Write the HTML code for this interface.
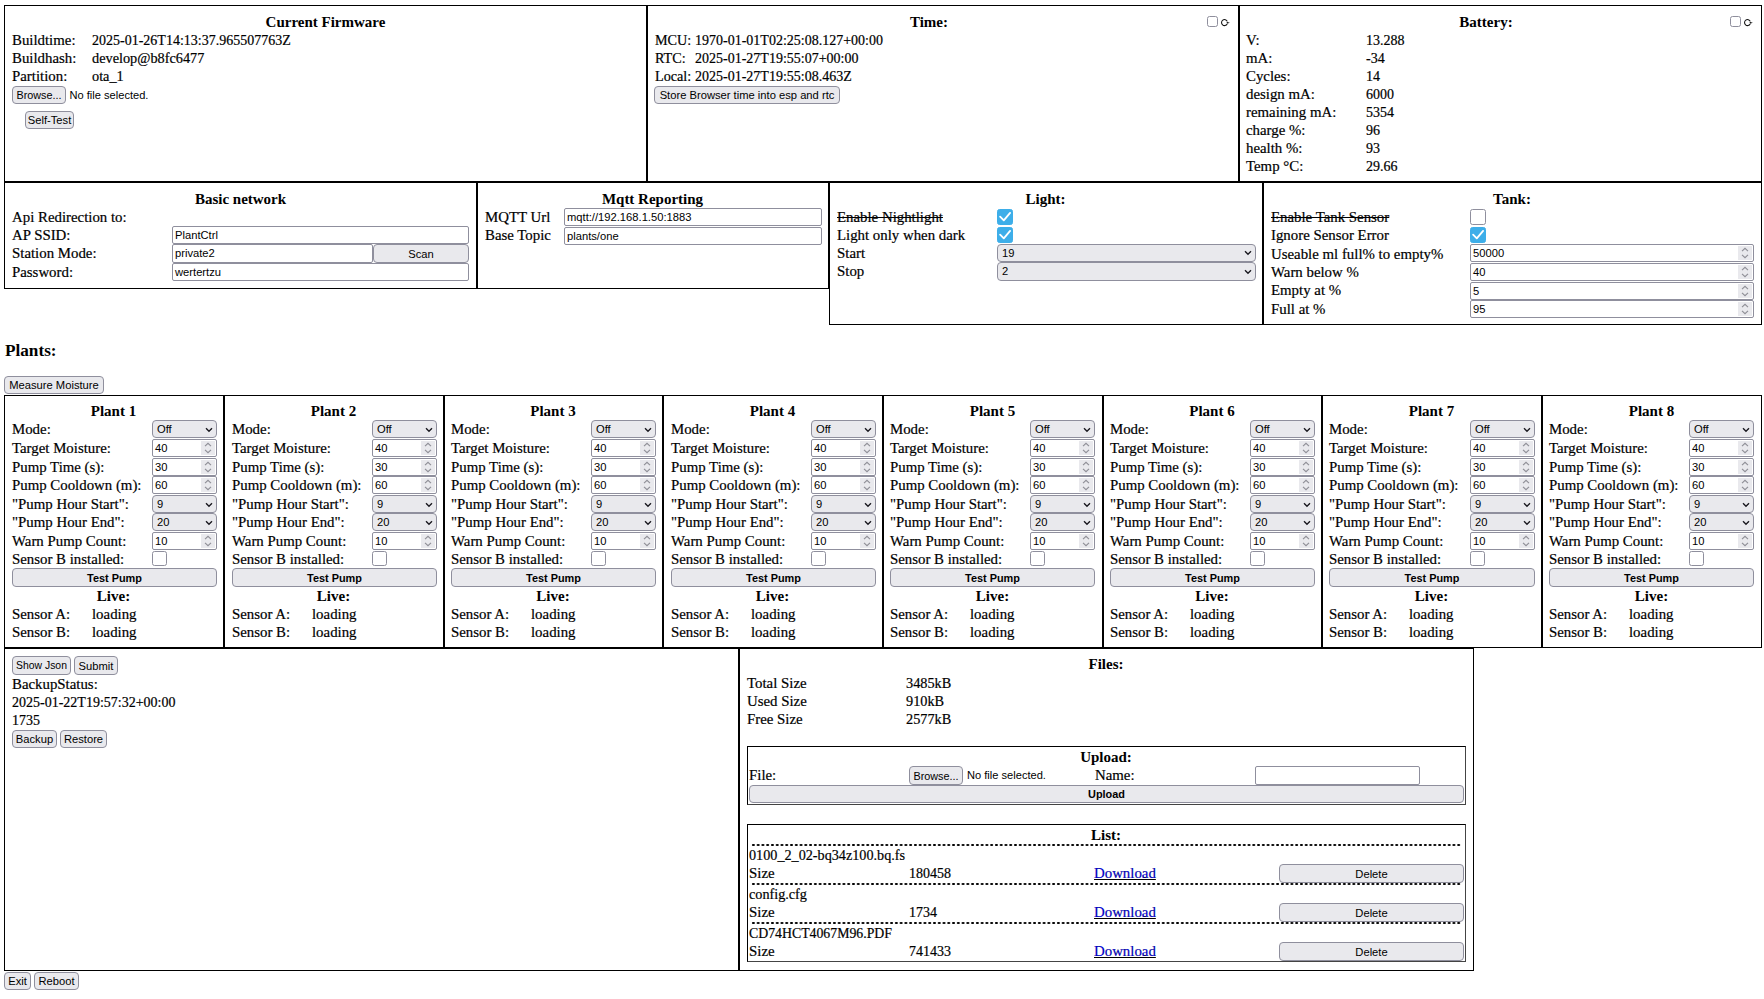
<!DOCTYPE html><html><head><meta charset="utf-8"><style>
*{box-sizing:border-box;margin:0;padding:0}
html,body{width:1764px;height:999px;overflow:hidden;background:#fff;position:relative}
.t{position:absolute;white-space:pre;line-height:20px;height:20px;color:#000}
.t.n{-webkit-text-stroke:0.2px #000}
.box{position:absolute;border:1px solid #000}
.btn{position:absolute;background:#e9e9ed;border:1px solid #8f8f9d;border-radius:4px;text-align:center;color:#000;white-space:pre;overflow:hidden}
.inp{position:absolute;background:#fff;border:1px solid #8f8f9d;border-radius:2px;padding-left:2px;font-size:11.2px;font-family:'Liberation Sans', sans-serif;color:#000;white-space:pre;overflow:hidden}
.spin{position:absolute;right:1px;width:14px;background:#e9e9ed}
.spin svg{display:block}
.sel{position:absolute;background:#e9e9ed;border:1px solid #8f8f9d;border-radius:4px;padding-left:4px;font-size:11.2px;font-family:'Liberation Sans', sans-serif;color:#000;white-space:pre;overflow:hidden}
.chev{position:absolute;right:3px}
.chk{position:absolute;border:1px solid #8f8f9d;border-radius:2.5px;background:#fff}
.chk.on{background:#3daee9;border-color:#3daee9}
.chk svg{position:absolute;left:-1px;top:-1px}
.dot{position:absolute;height:2px;background-image:radial-gradient(ellipse 1.35px 1.1px at 50% 50%,#000 80%,transparent 100%);background-size:4.78px 2px}
</style></head><body>
<div class="box" style="left:4px;top:5px;width:643px;height:177px;"></div>
<div class="box" style="left:647px;top:5px;width:592px;height:177px;"></div>
<div class="box" style="left:1239px;top:5px;width:523px;height:177px;"></div>
<div class="t" style="left:-74.5px;top:12px;width:800px;text-align:center;font:bold 15px/20px 'Liberation Serif', serif;">Current Firmware</div>
<div class="t n" style="left:12px;top:30px;font:normal 14.85px/20px 'Liberation Serif', serif;">Buildtime:</div>
<div class="t n" style="left:92px;top:31px;font:normal 14px/20px 'Liberation Serif', serif;">2025-01-26T14:13:37.965507763Z</div>
<div class="t n" style="left:12px;top:48px;font:normal 14.85px/20px 'Liberation Serif', serif;">Buildhash:</div>
<div class="t n" style="left:92px;top:48px;font:normal 14.3px/20px 'Liberation Serif', serif;">develop@b8fc6477</div>
<div class="t n" style="left:12px;top:66px;font:normal 14.85px/20px 'Liberation Serif', serif;">Partition:</div>
<div class="t n" style="left:92px;top:66px;font:normal 14.3px/20px 'Liberation Serif', serif;">ota_1</div>
<div class="btn" style="left:12px;top:86px;width:54px;height:18px;padding-top:0px;font:normal 10.8px/16px 'Liberation Sans', sans-serif;">Browse...</div>
<div class="t" style="left:69.5px;top:85px;font:normal 11.1px/20px 'Liberation Sans', sans-serif;">No file selected.</div>
<div class="btn" style="left:25px;top:111px;width:49px;height:18px;padding-top:0px;font:normal 11.2px/16px 'Liberation Sans', sans-serif;">Self-Test</div>
<div class="t" style="left:529px;top:12px;width:800px;text-align:center;font:bold 15px/20px 'Liberation Serif', serif;">Time:</div>
<div class="chk" style="left:1207px;top:16px;width:11px;height:11px"></div>
<svg style="position:absolute;left:1220px;top:17.5px" width="12" height="10" viewBox="0 0 12 10"><path d="M7.3 3.4 A3.0 3.0 0 1 0 7.2 6.0" fill="none" stroke="#111" stroke-width="1.05"/><path d="M6.6 3.7 L9.8 4.7 L7.0 5.8 Z" fill="#111"/></svg>
<div class="t n" style="left:655px;top:30px;font:normal 14.2px/20px 'Liberation Serif', serif;">MCU:</div>
<div class="t n" style="left:695px;top:31px;font:normal 14px/20px 'Liberation Serif', serif;">1970-01-01T02:25:08.127+00:00</div>
<div class="t n" style="left:655px;top:48px;font:normal 14.2px/20px 'Liberation Serif', serif;">RTC:</div>
<div class="t n" style="left:695px;top:49px;font:normal 14px/20px 'Liberation Serif', serif;">2025-01-27T19:55:07+00:00</div>
<div class="t n" style="left:655px;top:66px;font:normal 14.2px/20px 'Liberation Serif', serif;">Local:</div>
<div class="t n" style="left:695px;top:67px;font:normal 14px/20px 'Liberation Serif', serif;">2025-01-27T19:55:08.463Z</div>
<div class="btn" style="left:654px;top:86px;width:186px;height:18px;padding-top:0px;font:normal 11.2px/16px 'Liberation Sans', sans-serif;">Store Browser time into esp and rtc</div>
<div class="t" style="left:1086px;top:12px;width:800px;text-align:center;font:bold 15px/20px 'Liberation Serif', serif;">Battery:</div>
<div class="chk" style="left:1730px;top:16px;width:11px;height:11px"></div>
<svg style="position:absolute;left:1743px;top:17.5px" width="12" height="10" viewBox="0 0 12 10"><path d="M7.3 3.4 A3.0 3.0 0 1 0 7.2 6.0" fill="none" stroke="#111" stroke-width="1.05"/><path d="M6.6 3.7 L9.8 4.7 L7.0 5.8 Z" fill="#111"/></svg>
<div class="t n" style="left:1246px;top:30px;font:normal 14.85px/20px 'Liberation Serif', serif;">V:</div>
<div class="t n" style="left:1366px;top:31px;font:normal 14px/20px 'Liberation Serif', serif;">13.288</div>
<div class="t n" style="left:1246px;top:48px;font:normal 14.85px/20px 'Liberation Serif', serif;">mA:</div>
<div class="t n" style="left:1366px;top:49px;font:normal 14px/20px 'Liberation Serif', serif;">-34</div>
<div class="t n" style="left:1246px;top:66px;font:normal 14.85px/20px 'Liberation Serif', serif;">Cycles:</div>
<div class="t n" style="left:1366px;top:67px;font:normal 14px/20px 'Liberation Serif', serif;">14</div>
<div class="t n" style="left:1246px;top:84px;font:normal 14.85px/20px 'Liberation Serif', serif;">design mA:</div>
<div class="t n" style="left:1366px;top:85px;font:normal 14px/20px 'Liberation Serif', serif;">6000</div>
<div class="t n" style="left:1246px;top:102px;font:normal 14.85px/20px 'Liberation Serif', serif;">remaining mA:</div>
<div class="t n" style="left:1366px;top:103px;font:normal 14px/20px 'Liberation Serif', serif;">5354</div>
<div class="t n" style="left:1246px;top:120px;font:normal 14.85px/20px 'Liberation Serif', serif;">charge %:</div>
<div class="t n" style="left:1366px;top:121px;font:normal 14px/20px 'Liberation Serif', serif;">96</div>
<div class="t n" style="left:1246px;top:138px;font:normal 14.85px/20px 'Liberation Serif', serif;">health %:</div>
<div class="t n" style="left:1366px;top:139px;font:normal 14px/20px 'Liberation Serif', serif;">93</div>
<div class="t n" style="left:1246px;top:156px;font:normal 14.85px/20px 'Liberation Serif', serif;">Temp °C:</div>
<div class="t n" style="left:1366px;top:157px;font:normal 14px/20px 'Liberation Serif', serif;">29.66</div>
<div class="box" style="left:4px;top:182px;width:473px;height:107px;"></div>
<div class="box" style="left:477px;top:182px;width:352px;height:107px;"></div>
<div class="box" style="left:829px;top:182px;width:434px;height:143px;"></div>
<div class="box" style="left:1263px;top:182px;width:499px;height:143px;"></div>
<div class="t" style="left:-159.5px;top:189px;width:800px;text-align:center;font:bold 15px/20px 'Liberation Serif', serif;">Basic network</div>
<div class="t n" style="left:12px;top:207px;font:normal 14.85px/20px 'Liberation Serif', serif;">Api Redirection to:</div>
<div class="t n" style="left:12px;top:225px;font:normal 14.85px/20px 'Liberation Serif', serif;">AP SSID:</div>
<div class="inp" style="left:172px;top:226px;width:297px;height:18px;line-height:16px;">PlantCtrl</div>
<div class="t n" style="left:12px;top:243px;font:normal 14.85px/20px 'Liberation Serif', serif;">Station Mode:</div>
<div class="inp" style="left:172px;top:244px;width:201px;height:19px;line-height:17px;">private2</div>
<div class="btn" style="left:373px;top:244px;width:96px;height:19px;padding-top:1px;font:normal 11.2px/16px 'Liberation Sans', sans-serif;">Scan</div>
<div class="t n" style="left:12px;top:261.5px;font:normal 14.85px/20px 'Liberation Serif', serif;">Password:</div>
<div class="inp" style="left:172px;top:263px;width:297px;height:18px;line-height:16px;">wertertzu</div>
<div class="t" style="left:252.5px;top:189px;width:800px;text-align:center;font:bold 15px/20px 'Liberation Serif', serif;">Mqtt Reporting</div>
<div class="t n" style="left:485px;top:207px;font:normal 14.85px/20px 'Liberation Serif', serif;">MQTT Url</div>
<div class="inp" style="left:564px;top:208px;width:258px;height:18px;line-height:16px;">mqtt://192.168.1.50:1883</div>
<div class="t n" style="left:485px;top:225px;font:normal 14.85px/20px 'Liberation Serif', serif;">Base Topic</div>
<div class="inp" style="left:564px;top:227px;width:258px;height:18px;line-height:16px;">plants/one</div>
<div class="t" style="left:645.5px;top:189px;width:800px;text-align:center;font:bold 15px/20px 'Liberation Serif', serif;">Light:</div>
<div class="t n" style="left:837px;top:207px;font:normal 14.85px/20px 'Liberation Serif', serif;text-decoration:line-through;">Enable Nightlight</div>
<div class="chk on" style="left:997px;top:209px;width:16px;height:16px"><svg width="16" height="16" viewBox="0 0 16 16"><path d="M3.1 7.6 L6.8 11.4 L13.1 3.9" fill="none" stroke="#fff" stroke-width="1.8" stroke-linecap="round" stroke-linejoin="round"/></svg></div>
<div class="t n" style="left:837px;top:225px;font:normal 14.85px/20px 'Liberation Serif', serif;">Light only when dark</div>
<div class="chk on" style="left:997px;top:227px;width:16px;height:16px"><svg width="16" height="16" viewBox="0 0 16 16"><path d="M3.1 7.6 L6.8 11.4 L13.1 3.9" fill="none" stroke="#fff" stroke-width="1.8" stroke-linecap="round" stroke-linejoin="round"/></svg></div>
<div class="t n" style="left:837px;top:243px;font:normal 14.85px/20px 'Liberation Serif', serif;">Start</div>
<div class="sel" style="left:997px;top:244px;width:259px;height:18px;line-height:16px;">19<svg class="chev" style="top:5px" width="8" height="6" viewBox="0 0 8 6"><path d="M1 1.2 L4 4.2 L7 1.2" fill="none" stroke="#1c1b22" stroke-width="1.4"/></svg></div>
<div class="t n" style="left:837px;top:261px;font:normal 14.85px/20px 'Liberation Serif', serif;">Stop</div>
<div class="sel" style="left:997px;top:262px;width:259px;height:19px;line-height:17px;">2<svg class="chev" style="top:6px" width="8" height="6" viewBox="0 0 8 6"><path d="M1 1.2 L4 4.2 L7 1.2" fill="none" stroke="#1c1b22" stroke-width="1.4"/></svg></div>
<div class="t" style="left:1112px;top:189px;width:800px;text-align:center;font:bold 15px/20px 'Liberation Serif', serif;">Tank:</div>
<div class="t n" style="left:1271px;top:207px;font:normal 14.85px/20px 'Liberation Serif', serif;text-decoration:line-through;">Enable Tank Sensor</div>
<div class="chk" style="left:1470px;top:209px;width:16px;height:16px"></div>
<div class="t n" style="left:1271px;top:225px;font:normal 14.85px/20px 'Liberation Serif', serif;">Ignore Sensor Error</div>
<div class="chk on" style="left:1470px;top:227px;width:16px;height:16px"><svg width="16" height="16" viewBox="0 0 16 16"><path d="M3.1 7.6 L6.8 11.4 L13.1 3.9" fill="none" stroke="#fff" stroke-width="1.8" stroke-linecap="round" stroke-linejoin="round"/></svg></div>
<div class="t n" style="left:1271px;top:243.5px;font:normal 14.85px/20px 'Liberation Serif', serif;">Useable ml full% to empty%</div>
<div class="inp" style="left:1470px;top:244px;width:284px;height:18px;line-height:16px;">50000<div class="spin" style="top:1px;height:14px"><svg width="14" height="14" viewBox="0 0 14 14" preserveAspectRatio="none"><path d="M4 5.2 L7 2.4 L10 5.2 M4 8.8 L7 11.6 L10 8.8" fill="none" stroke="#8f8f97" stroke-width="1.15"/></svg></div></div>
<div class="t n" style="left:1271px;top:261.5px;font:normal 14.85px/20px 'Liberation Serif', serif;">Warn below %</div>
<div class="inp" style="left:1470px;top:263px;width:284px;height:18px;line-height:16px;">40<div class="spin" style="top:1px;height:14px"><svg width="14" height="14" viewBox="0 0 14 14" preserveAspectRatio="none"><path d="M4 5.2 L7 2.4 L10 5.2 M4 8.8 L7 11.6 L10 8.8" fill="none" stroke="#8f8f97" stroke-width="1.15"/></svg></div></div>
<div class="t n" style="left:1271px;top:280px;font:normal 14.85px/20px 'Liberation Serif', serif;">Empty at %</div>
<div class="inp" style="left:1470px;top:281.5px;width:284px;height:18.0px;line-height:16.0px;">5<div class="spin" style="top:1px;height:14.0px"><svg width="14" height="14.0" viewBox="0 0 14 14" preserveAspectRatio="none"><path d="M4 5.2 L7 2.4 L10 5.2 M4 8.8 L7 11.6 L10 8.8" fill="none" stroke="#8f8f97" stroke-width="1.15"/></svg></div></div>
<div class="t n" style="left:1271px;top:298.5px;font:normal 14.85px/20px 'Liberation Serif', serif;">Full at %</div>
<div class="inp" style="left:1470px;top:300px;width:284px;height:18px;line-height:16px;">95<div class="spin" style="top:1px;height:14px"><svg width="14" height="14" viewBox="0 0 14 14" preserveAspectRatio="none"><path d="M4 5.2 L7 2.4 L10 5.2 M4 8.8 L7 11.6 L10 8.8" fill="none" stroke="#8f8f97" stroke-width="1.15"/></svg></div></div>
<div class="t" style="left:5px;top:341px;font:bold 17.2px/20px 'Liberation Serif', serif;">Plants:</div>
<div class="btn" style="left:4px;top:376px;width:100px;height:18px;padding-top:0px;font:normal 11.2px/16px 'Liberation Sans', sans-serif;">Measure Moisture</div>
<div class="box" style="left:4px;top:395px;width:220px;height:253px;"></div>
<div class="t" style="left:-286.5px;top:401px;width:800px;text-align:center;font:bold 15px/20px 'Liberation Serif', serif;">Plant 1</div>
<div class="t n" style="left:12px;top:419px;font:normal 14.85px/20px 'Liberation Serif', serif;">Mode:</div>
<div class="sel" style="left:152px;top:420px;width:65px;height:18.30000000000001px;line-height:16.30000000000001px;">Off<svg class="chev" style="top:6px" width="8" height="6" viewBox="0 0 8 6"><path d="M1 1.2 L4 4.2 L7 1.2" fill="none" stroke="#1c1b22" stroke-width="1.4"/></svg></div>
<div class="t n" style="left:12px;top:438px;font:normal 14.85px/20px 'Liberation Serif', serif;">Target Moisture:</div>
<div class="inp" style="left:152px;top:439px;width:65px;height:18px;line-height:16px;">40<div class="spin" style="top:1px;height:14px"><svg width="14" height="14" viewBox="0 0 14 14" preserveAspectRatio="none"><path d="M4 5.2 L7 2.4 L10 5.2 M4 8.8 L7 11.6 L10 8.8" fill="none" stroke="#8f8f97" stroke-width="1.15"/></svg></div></div>
<div class="t n" style="left:12px;top:456.5px;font:normal 14.85px/20px 'Liberation Serif', serif;">Pump Time (s):</div>
<div class="inp" style="left:152px;top:457.5px;width:65px;height:18.0px;line-height:16.0px;">30<div class="spin" style="top:1px;height:14.0px"><svg width="14" height="14.0" viewBox="0 0 14 14" preserveAspectRatio="none"><path d="M4 5.2 L7 2.4 L10 5.2 M4 8.8 L7 11.6 L10 8.8" fill="none" stroke="#8f8f97" stroke-width="1.15"/></svg></div></div>
<div class="t n" style="left:12px;top:475px;font:normal 14.85px/20px 'Liberation Serif', serif;">Pump Cooldown (m):</div>
<div class="inp" style="left:152px;top:476px;width:65px;height:18px;line-height:16px;">60<div class="spin" style="top:1px;height:14px"><svg width="14" height="14" viewBox="0 0 14 14" preserveAspectRatio="none"><path d="M4 5.2 L7 2.4 L10 5.2 M4 8.8 L7 11.6 L10 8.8" fill="none" stroke="#8f8f97" stroke-width="1.15"/></svg></div></div>
<div class="t n" style="left:12px;top:494px;font:normal 14.85px/20px 'Liberation Serif', serif;">"Pump Hour Start":</div>
<div class="sel" style="left:152px;top:495px;width:65px;height:18.299999999999955px;line-height:16.299999999999955px;">9<svg class="chev" style="top:6px" width="8" height="6" viewBox="0 0 8 6"><path d="M1 1.2 L4 4.2 L7 1.2" fill="none" stroke="#1c1b22" stroke-width="1.4"/></svg></div>
<div class="t n" style="left:12px;top:512px;font:normal 14.85px/20px 'Liberation Serif', serif;">"Pump Hour End":</div>
<div class="sel" style="left:152px;top:513px;width:65px;height:18.299999999999955px;line-height:16.299999999999955px;">20<svg class="chev" style="top:6px" width="8" height="6" viewBox="0 0 8 6"><path d="M1 1.2 L4 4.2 L7 1.2" fill="none" stroke="#1c1b22" stroke-width="1.4"/></svg></div>
<div class="t n" style="left:12px;top:531px;font:normal 14.85px/20px 'Liberation Serif', serif;">Warn Pump Count:</div>
<div class="inp" style="left:152px;top:532px;width:65px;height:18px;line-height:16px;">10<div class="spin" style="top:1px;height:14px"><svg width="14" height="14" viewBox="0 0 14 14" preserveAspectRatio="none"><path d="M4 5.2 L7 2.4 L10 5.2 M4 8.8 L7 11.6 L10 8.8" fill="none" stroke="#8f8f97" stroke-width="1.15"/></svg></div></div>
<div class="t n" style="left:12px;top:549px;font:normal 14.85px/20px 'Liberation Serif', serif;">Sensor B installed:</div>
<div class="chk" style="left:152px;top:551px;width:15px;height:15px"></div>
<div class="btn" style="left:12px;top:568px;width:205px;height:19px;padding-top:1px;font:bold 10.9px/16px 'Liberation Sans', sans-serif;">Test Pump</div>
<div class="t" style="left:-286.5px;top:586px;width:800px;text-align:center;font:bold 15px/20px 'Liberation Serif', serif;">Live:</div>
<div class="t n" style="left:12px;top:604px;font:normal 14.85px/20px 'Liberation Serif', serif;">Sensor A:</div>
<div class="t n" style="left:92px;top:604px;font:normal 14.85px/20px 'Liberation Serif', serif;">loading</div>
<div class="t n" style="left:12px;top:622px;font:normal 14.85px/20px 'Liberation Serif', serif;">Sensor B:</div>
<div class="t n" style="left:92px;top:622px;font:normal 14.85px/20px 'Liberation Serif', serif;">loading</div>
<div class="box" style="left:224px;top:395px;width:220px;height:253px;"></div>
<div class="t" style="left:-66.5px;top:401px;width:800px;text-align:center;font:bold 15px/20px 'Liberation Serif', serif;">Plant 2</div>
<div class="t n" style="left:232px;top:419px;font:normal 14.85px/20px 'Liberation Serif', serif;">Mode:</div>
<div class="sel" style="left:372px;top:420px;width:65px;height:18.30000000000001px;line-height:16.30000000000001px;">Off<svg class="chev" style="top:6px" width="8" height="6" viewBox="0 0 8 6"><path d="M1 1.2 L4 4.2 L7 1.2" fill="none" stroke="#1c1b22" stroke-width="1.4"/></svg></div>
<div class="t n" style="left:232px;top:438px;font:normal 14.85px/20px 'Liberation Serif', serif;">Target Moisture:</div>
<div class="inp" style="left:372px;top:439px;width:65px;height:18px;line-height:16px;">40<div class="spin" style="top:1px;height:14px"><svg width="14" height="14" viewBox="0 0 14 14" preserveAspectRatio="none"><path d="M4 5.2 L7 2.4 L10 5.2 M4 8.8 L7 11.6 L10 8.8" fill="none" stroke="#8f8f97" stroke-width="1.15"/></svg></div></div>
<div class="t n" style="left:232px;top:456.5px;font:normal 14.85px/20px 'Liberation Serif', serif;">Pump Time (s):</div>
<div class="inp" style="left:372px;top:457.5px;width:65px;height:18.0px;line-height:16.0px;">30<div class="spin" style="top:1px;height:14.0px"><svg width="14" height="14.0" viewBox="0 0 14 14" preserveAspectRatio="none"><path d="M4 5.2 L7 2.4 L10 5.2 M4 8.8 L7 11.6 L10 8.8" fill="none" stroke="#8f8f97" stroke-width="1.15"/></svg></div></div>
<div class="t n" style="left:232px;top:475px;font:normal 14.85px/20px 'Liberation Serif', serif;">Pump Cooldown (m):</div>
<div class="inp" style="left:372px;top:476px;width:65px;height:18px;line-height:16px;">60<div class="spin" style="top:1px;height:14px"><svg width="14" height="14" viewBox="0 0 14 14" preserveAspectRatio="none"><path d="M4 5.2 L7 2.4 L10 5.2 M4 8.8 L7 11.6 L10 8.8" fill="none" stroke="#8f8f97" stroke-width="1.15"/></svg></div></div>
<div class="t n" style="left:232px;top:494px;font:normal 14.85px/20px 'Liberation Serif', serif;">"Pump Hour Start":</div>
<div class="sel" style="left:372px;top:495px;width:65px;height:18.299999999999955px;line-height:16.299999999999955px;">9<svg class="chev" style="top:6px" width="8" height="6" viewBox="0 0 8 6"><path d="M1 1.2 L4 4.2 L7 1.2" fill="none" stroke="#1c1b22" stroke-width="1.4"/></svg></div>
<div class="t n" style="left:232px;top:512px;font:normal 14.85px/20px 'Liberation Serif', serif;">"Pump Hour End":</div>
<div class="sel" style="left:372px;top:513px;width:65px;height:18.299999999999955px;line-height:16.299999999999955px;">20<svg class="chev" style="top:6px" width="8" height="6" viewBox="0 0 8 6"><path d="M1 1.2 L4 4.2 L7 1.2" fill="none" stroke="#1c1b22" stroke-width="1.4"/></svg></div>
<div class="t n" style="left:232px;top:531px;font:normal 14.85px/20px 'Liberation Serif', serif;">Warn Pump Count:</div>
<div class="inp" style="left:372px;top:532px;width:65px;height:18px;line-height:16px;">10<div class="spin" style="top:1px;height:14px"><svg width="14" height="14" viewBox="0 0 14 14" preserveAspectRatio="none"><path d="M4 5.2 L7 2.4 L10 5.2 M4 8.8 L7 11.6 L10 8.8" fill="none" stroke="#8f8f97" stroke-width="1.15"/></svg></div></div>
<div class="t n" style="left:232px;top:549px;font:normal 14.85px/20px 'Liberation Serif', serif;">Sensor B installed:</div>
<div class="chk" style="left:372px;top:551px;width:15px;height:15px"></div>
<div class="btn" style="left:232px;top:568px;width:205px;height:19px;padding-top:1px;font:bold 10.9px/16px 'Liberation Sans', sans-serif;">Test Pump</div>
<div class="t" style="left:-66.5px;top:586px;width:800px;text-align:center;font:bold 15px/20px 'Liberation Serif', serif;">Live:</div>
<div class="t n" style="left:232px;top:604px;font:normal 14.85px/20px 'Liberation Serif', serif;">Sensor A:</div>
<div class="t n" style="left:312px;top:604px;font:normal 14.85px/20px 'Liberation Serif', serif;">loading</div>
<div class="t n" style="left:232px;top:622px;font:normal 14.85px/20px 'Liberation Serif', serif;">Sensor B:</div>
<div class="t n" style="left:312px;top:622px;font:normal 14.85px/20px 'Liberation Serif', serif;">loading</div>
<div class="box" style="left:444px;top:395px;width:219px;height:253px;"></div>
<div class="t" style="left:153.0px;top:401px;width:800px;text-align:center;font:bold 15px/20px 'Liberation Serif', serif;">Plant 3</div>
<div class="t n" style="left:451px;top:419px;font:normal 14.85px/20px 'Liberation Serif', serif;">Mode:</div>
<div class="sel" style="left:591px;top:420px;width:65px;height:18.30000000000001px;line-height:16.30000000000001px;">Off<svg class="chev" style="top:6px" width="8" height="6" viewBox="0 0 8 6"><path d="M1 1.2 L4 4.2 L7 1.2" fill="none" stroke="#1c1b22" stroke-width="1.4"/></svg></div>
<div class="t n" style="left:451px;top:438px;font:normal 14.85px/20px 'Liberation Serif', serif;">Target Moisture:</div>
<div class="inp" style="left:591px;top:439px;width:65px;height:18px;line-height:16px;">40<div class="spin" style="top:1px;height:14px"><svg width="14" height="14" viewBox="0 0 14 14" preserveAspectRatio="none"><path d="M4 5.2 L7 2.4 L10 5.2 M4 8.8 L7 11.6 L10 8.8" fill="none" stroke="#8f8f97" stroke-width="1.15"/></svg></div></div>
<div class="t n" style="left:451px;top:456.5px;font:normal 14.85px/20px 'Liberation Serif', serif;">Pump Time (s):</div>
<div class="inp" style="left:591px;top:457.5px;width:65px;height:18.0px;line-height:16.0px;">30<div class="spin" style="top:1px;height:14.0px"><svg width="14" height="14.0" viewBox="0 0 14 14" preserveAspectRatio="none"><path d="M4 5.2 L7 2.4 L10 5.2 M4 8.8 L7 11.6 L10 8.8" fill="none" stroke="#8f8f97" stroke-width="1.15"/></svg></div></div>
<div class="t n" style="left:451px;top:475px;font:normal 14.85px/20px 'Liberation Serif', serif;">Pump Cooldown (m):</div>
<div class="inp" style="left:591px;top:476px;width:65px;height:18px;line-height:16px;">60<div class="spin" style="top:1px;height:14px"><svg width="14" height="14" viewBox="0 0 14 14" preserveAspectRatio="none"><path d="M4 5.2 L7 2.4 L10 5.2 M4 8.8 L7 11.6 L10 8.8" fill="none" stroke="#8f8f97" stroke-width="1.15"/></svg></div></div>
<div class="t n" style="left:451px;top:494px;font:normal 14.85px/20px 'Liberation Serif', serif;">"Pump Hour Start":</div>
<div class="sel" style="left:591px;top:495px;width:65px;height:18.299999999999955px;line-height:16.299999999999955px;">9<svg class="chev" style="top:6px" width="8" height="6" viewBox="0 0 8 6"><path d="M1 1.2 L4 4.2 L7 1.2" fill="none" stroke="#1c1b22" stroke-width="1.4"/></svg></div>
<div class="t n" style="left:451px;top:512px;font:normal 14.85px/20px 'Liberation Serif', serif;">"Pump Hour End":</div>
<div class="sel" style="left:591px;top:513px;width:65px;height:18.299999999999955px;line-height:16.299999999999955px;">20<svg class="chev" style="top:6px" width="8" height="6" viewBox="0 0 8 6"><path d="M1 1.2 L4 4.2 L7 1.2" fill="none" stroke="#1c1b22" stroke-width="1.4"/></svg></div>
<div class="t n" style="left:451px;top:531px;font:normal 14.85px/20px 'Liberation Serif', serif;">Warn Pump Count:</div>
<div class="inp" style="left:591px;top:532px;width:65px;height:18px;line-height:16px;">10<div class="spin" style="top:1px;height:14px"><svg width="14" height="14" viewBox="0 0 14 14" preserveAspectRatio="none"><path d="M4 5.2 L7 2.4 L10 5.2 M4 8.8 L7 11.6 L10 8.8" fill="none" stroke="#8f8f97" stroke-width="1.15"/></svg></div></div>
<div class="t n" style="left:451px;top:549px;font:normal 14.85px/20px 'Liberation Serif', serif;">Sensor B installed:</div>
<div class="chk" style="left:591px;top:551px;width:15px;height:15px"></div>
<div class="btn" style="left:451px;top:568px;width:205px;height:19px;padding-top:1px;font:bold 10.9px/16px 'Liberation Sans', sans-serif;">Test Pump</div>
<div class="t" style="left:153.0px;top:586px;width:800px;text-align:center;font:bold 15px/20px 'Liberation Serif', serif;">Live:</div>
<div class="t n" style="left:451px;top:604px;font:normal 14.85px/20px 'Liberation Serif', serif;">Sensor A:</div>
<div class="t n" style="left:531px;top:604px;font:normal 14.85px/20px 'Liberation Serif', serif;">loading</div>
<div class="t n" style="left:451px;top:622px;font:normal 14.85px/20px 'Liberation Serif', serif;">Sensor B:</div>
<div class="t n" style="left:531px;top:622px;font:normal 14.85px/20px 'Liberation Serif', serif;">loading</div>
<div class="box" style="left:663px;top:395px;width:220px;height:253px;"></div>
<div class="t" style="left:372.5px;top:401px;width:800px;text-align:center;font:bold 15px/20px 'Liberation Serif', serif;">Plant 4</div>
<div class="t n" style="left:671px;top:419px;font:normal 14.85px/20px 'Liberation Serif', serif;">Mode:</div>
<div class="sel" style="left:811px;top:420px;width:65px;height:18.30000000000001px;line-height:16.30000000000001px;">Off<svg class="chev" style="top:6px" width="8" height="6" viewBox="0 0 8 6"><path d="M1 1.2 L4 4.2 L7 1.2" fill="none" stroke="#1c1b22" stroke-width="1.4"/></svg></div>
<div class="t n" style="left:671px;top:438px;font:normal 14.85px/20px 'Liberation Serif', serif;">Target Moisture:</div>
<div class="inp" style="left:811px;top:439px;width:65px;height:18px;line-height:16px;">40<div class="spin" style="top:1px;height:14px"><svg width="14" height="14" viewBox="0 0 14 14" preserveAspectRatio="none"><path d="M4 5.2 L7 2.4 L10 5.2 M4 8.8 L7 11.6 L10 8.8" fill="none" stroke="#8f8f97" stroke-width="1.15"/></svg></div></div>
<div class="t n" style="left:671px;top:456.5px;font:normal 14.85px/20px 'Liberation Serif', serif;">Pump Time (s):</div>
<div class="inp" style="left:811px;top:457.5px;width:65px;height:18.0px;line-height:16.0px;">30<div class="spin" style="top:1px;height:14.0px"><svg width="14" height="14.0" viewBox="0 0 14 14" preserveAspectRatio="none"><path d="M4 5.2 L7 2.4 L10 5.2 M4 8.8 L7 11.6 L10 8.8" fill="none" stroke="#8f8f97" stroke-width="1.15"/></svg></div></div>
<div class="t n" style="left:671px;top:475px;font:normal 14.85px/20px 'Liberation Serif', serif;">Pump Cooldown (m):</div>
<div class="inp" style="left:811px;top:476px;width:65px;height:18px;line-height:16px;">60<div class="spin" style="top:1px;height:14px"><svg width="14" height="14" viewBox="0 0 14 14" preserveAspectRatio="none"><path d="M4 5.2 L7 2.4 L10 5.2 M4 8.8 L7 11.6 L10 8.8" fill="none" stroke="#8f8f97" stroke-width="1.15"/></svg></div></div>
<div class="t n" style="left:671px;top:494px;font:normal 14.85px/20px 'Liberation Serif', serif;">"Pump Hour Start":</div>
<div class="sel" style="left:811px;top:495px;width:65px;height:18.299999999999955px;line-height:16.299999999999955px;">9<svg class="chev" style="top:6px" width="8" height="6" viewBox="0 0 8 6"><path d="M1 1.2 L4 4.2 L7 1.2" fill="none" stroke="#1c1b22" stroke-width="1.4"/></svg></div>
<div class="t n" style="left:671px;top:512px;font:normal 14.85px/20px 'Liberation Serif', serif;">"Pump Hour End":</div>
<div class="sel" style="left:811px;top:513px;width:65px;height:18.299999999999955px;line-height:16.299999999999955px;">20<svg class="chev" style="top:6px" width="8" height="6" viewBox="0 0 8 6"><path d="M1 1.2 L4 4.2 L7 1.2" fill="none" stroke="#1c1b22" stroke-width="1.4"/></svg></div>
<div class="t n" style="left:671px;top:531px;font:normal 14.85px/20px 'Liberation Serif', serif;">Warn Pump Count:</div>
<div class="inp" style="left:811px;top:532px;width:65px;height:18px;line-height:16px;">10<div class="spin" style="top:1px;height:14px"><svg width="14" height="14" viewBox="0 0 14 14" preserveAspectRatio="none"><path d="M4 5.2 L7 2.4 L10 5.2 M4 8.8 L7 11.6 L10 8.8" fill="none" stroke="#8f8f97" stroke-width="1.15"/></svg></div></div>
<div class="t n" style="left:671px;top:549px;font:normal 14.85px/20px 'Liberation Serif', serif;">Sensor B installed:</div>
<div class="chk" style="left:811px;top:551px;width:15px;height:15px"></div>
<div class="btn" style="left:671px;top:568px;width:205px;height:19px;padding-top:1px;font:bold 10.9px/16px 'Liberation Sans', sans-serif;">Test Pump</div>
<div class="t" style="left:372.5px;top:586px;width:800px;text-align:center;font:bold 15px/20px 'Liberation Serif', serif;">Live:</div>
<div class="t n" style="left:671px;top:604px;font:normal 14.85px/20px 'Liberation Serif', serif;">Sensor A:</div>
<div class="t n" style="left:751px;top:604px;font:normal 14.85px/20px 'Liberation Serif', serif;">loading</div>
<div class="t n" style="left:671px;top:622px;font:normal 14.85px/20px 'Liberation Serif', serif;">Sensor B:</div>
<div class="t n" style="left:751px;top:622px;font:normal 14.85px/20px 'Liberation Serif', serif;">loading</div>
<div class="box" style="left:883px;top:395px;width:220px;height:253px;"></div>
<div class="t" style="left:592.5px;top:401px;width:800px;text-align:center;font:bold 15px/20px 'Liberation Serif', serif;">Plant 5</div>
<div class="t n" style="left:890px;top:419px;font:normal 14.85px/20px 'Liberation Serif', serif;">Mode:</div>
<div class="sel" style="left:1030px;top:420px;width:65px;height:18.30000000000001px;line-height:16.30000000000001px;">Off<svg class="chev" style="top:6px" width="8" height="6" viewBox="0 0 8 6"><path d="M1 1.2 L4 4.2 L7 1.2" fill="none" stroke="#1c1b22" stroke-width="1.4"/></svg></div>
<div class="t n" style="left:890px;top:438px;font:normal 14.85px/20px 'Liberation Serif', serif;">Target Moisture:</div>
<div class="inp" style="left:1030px;top:439px;width:65px;height:18px;line-height:16px;">40<div class="spin" style="top:1px;height:14px"><svg width="14" height="14" viewBox="0 0 14 14" preserveAspectRatio="none"><path d="M4 5.2 L7 2.4 L10 5.2 M4 8.8 L7 11.6 L10 8.8" fill="none" stroke="#8f8f97" stroke-width="1.15"/></svg></div></div>
<div class="t n" style="left:890px;top:456.5px;font:normal 14.85px/20px 'Liberation Serif', serif;">Pump Time (s):</div>
<div class="inp" style="left:1030px;top:457.5px;width:65px;height:18.0px;line-height:16.0px;">30<div class="spin" style="top:1px;height:14.0px"><svg width="14" height="14.0" viewBox="0 0 14 14" preserveAspectRatio="none"><path d="M4 5.2 L7 2.4 L10 5.2 M4 8.8 L7 11.6 L10 8.8" fill="none" stroke="#8f8f97" stroke-width="1.15"/></svg></div></div>
<div class="t n" style="left:890px;top:475px;font:normal 14.85px/20px 'Liberation Serif', serif;">Pump Cooldown (m):</div>
<div class="inp" style="left:1030px;top:476px;width:65px;height:18px;line-height:16px;">60<div class="spin" style="top:1px;height:14px"><svg width="14" height="14" viewBox="0 0 14 14" preserveAspectRatio="none"><path d="M4 5.2 L7 2.4 L10 5.2 M4 8.8 L7 11.6 L10 8.8" fill="none" stroke="#8f8f97" stroke-width="1.15"/></svg></div></div>
<div class="t n" style="left:890px;top:494px;font:normal 14.85px/20px 'Liberation Serif', serif;">"Pump Hour Start":</div>
<div class="sel" style="left:1030px;top:495px;width:65px;height:18.299999999999955px;line-height:16.299999999999955px;">9<svg class="chev" style="top:6px" width="8" height="6" viewBox="0 0 8 6"><path d="M1 1.2 L4 4.2 L7 1.2" fill="none" stroke="#1c1b22" stroke-width="1.4"/></svg></div>
<div class="t n" style="left:890px;top:512px;font:normal 14.85px/20px 'Liberation Serif', serif;">"Pump Hour End":</div>
<div class="sel" style="left:1030px;top:513px;width:65px;height:18.299999999999955px;line-height:16.299999999999955px;">20<svg class="chev" style="top:6px" width="8" height="6" viewBox="0 0 8 6"><path d="M1 1.2 L4 4.2 L7 1.2" fill="none" stroke="#1c1b22" stroke-width="1.4"/></svg></div>
<div class="t n" style="left:890px;top:531px;font:normal 14.85px/20px 'Liberation Serif', serif;">Warn Pump Count:</div>
<div class="inp" style="left:1030px;top:532px;width:65px;height:18px;line-height:16px;">10<div class="spin" style="top:1px;height:14px"><svg width="14" height="14" viewBox="0 0 14 14" preserveAspectRatio="none"><path d="M4 5.2 L7 2.4 L10 5.2 M4 8.8 L7 11.6 L10 8.8" fill="none" stroke="#8f8f97" stroke-width="1.15"/></svg></div></div>
<div class="t n" style="left:890px;top:549px;font:normal 14.85px/20px 'Liberation Serif', serif;">Sensor B installed:</div>
<div class="chk" style="left:1030px;top:551px;width:15px;height:15px"></div>
<div class="btn" style="left:890px;top:568px;width:205px;height:19px;padding-top:1px;font:bold 10.9px/16px 'Liberation Sans', sans-serif;">Test Pump</div>
<div class="t" style="left:592.5px;top:586px;width:800px;text-align:center;font:bold 15px/20px 'Liberation Serif', serif;">Live:</div>
<div class="t n" style="left:890px;top:604px;font:normal 14.85px/20px 'Liberation Serif', serif;">Sensor A:</div>
<div class="t n" style="left:970px;top:604px;font:normal 14.85px/20px 'Liberation Serif', serif;">loading</div>
<div class="t n" style="left:890px;top:622px;font:normal 14.85px/20px 'Liberation Serif', serif;">Sensor B:</div>
<div class="t n" style="left:970px;top:622px;font:normal 14.85px/20px 'Liberation Serif', serif;">loading</div>
<div class="box" style="left:1103px;top:395px;width:219px;height:253px;"></div>
<div class="t" style="left:812.0px;top:401px;width:800px;text-align:center;font:bold 15px/20px 'Liberation Serif', serif;">Plant 6</div>
<div class="t n" style="left:1110px;top:419px;font:normal 14.85px/20px 'Liberation Serif', serif;">Mode:</div>
<div class="sel" style="left:1250px;top:420px;width:65px;height:18.30000000000001px;line-height:16.30000000000001px;">Off<svg class="chev" style="top:6px" width="8" height="6" viewBox="0 0 8 6"><path d="M1 1.2 L4 4.2 L7 1.2" fill="none" stroke="#1c1b22" stroke-width="1.4"/></svg></div>
<div class="t n" style="left:1110px;top:438px;font:normal 14.85px/20px 'Liberation Serif', serif;">Target Moisture:</div>
<div class="inp" style="left:1250px;top:439px;width:65px;height:18px;line-height:16px;">40<div class="spin" style="top:1px;height:14px"><svg width="14" height="14" viewBox="0 0 14 14" preserveAspectRatio="none"><path d="M4 5.2 L7 2.4 L10 5.2 M4 8.8 L7 11.6 L10 8.8" fill="none" stroke="#8f8f97" stroke-width="1.15"/></svg></div></div>
<div class="t n" style="left:1110px;top:456.5px;font:normal 14.85px/20px 'Liberation Serif', serif;">Pump Time (s):</div>
<div class="inp" style="left:1250px;top:457.5px;width:65px;height:18.0px;line-height:16.0px;">30<div class="spin" style="top:1px;height:14.0px"><svg width="14" height="14.0" viewBox="0 0 14 14" preserveAspectRatio="none"><path d="M4 5.2 L7 2.4 L10 5.2 M4 8.8 L7 11.6 L10 8.8" fill="none" stroke="#8f8f97" stroke-width="1.15"/></svg></div></div>
<div class="t n" style="left:1110px;top:475px;font:normal 14.85px/20px 'Liberation Serif', serif;">Pump Cooldown (m):</div>
<div class="inp" style="left:1250px;top:476px;width:65px;height:18px;line-height:16px;">60<div class="spin" style="top:1px;height:14px"><svg width="14" height="14" viewBox="0 0 14 14" preserveAspectRatio="none"><path d="M4 5.2 L7 2.4 L10 5.2 M4 8.8 L7 11.6 L10 8.8" fill="none" stroke="#8f8f97" stroke-width="1.15"/></svg></div></div>
<div class="t n" style="left:1110px;top:494px;font:normal 14.85px/20px 'Liberation Serif', serif;">"Pump Hour Start":</div>
<div class="sel" style="left:1250px;top:495px;width:65px;height:18.299999999999955px;line-height:16.299999999999955px;">9<svg class="chev" style="top:6px" width="8" height="6" viewBox="0 0 8 6"><path d="M1 1.2 L4 4.2 L7 1.2" fill="none" stroke="#1c1b22" stroke-width="1.4"/></svg></div>
<div class="t n" style="left:1110px;top:512px;font:normal 14.85px/20px 'Liberation Serif', serif;">"Pump Hour End":</div>
<div class="sel" style="left:1250px;top:513px;width:65px;height:18.299999999999955px;line-height:16.299999999999955px;">20<svg class="chev" style="top:6px" width="8" height="6" viewBox="0 0 8 6"><path d="M1 1.2 L4 4.2 L7 1.2" fill="none" stroke="#1c1b22" stroke-width="1.4"/></svg></div>
<div class="t n" style="left:1110px;top:531px;font:normal 14.85px/20px 'Liberation Serif', serif;">Warn Pump Count:</div>
<div class="inp" style="left:1250px;top:532px;width:65px;height:18px;line-height:16px;">10<div class="spin" style="top:1px;height:14px"><svg width="14" height="14" viewBox="0 0 14 14" preserveAspectRatio="none"><path d="M4 5.2 L7 2.4 L10 5.2 M4 8.8 L7 11.6 L10 8.8" fill="none" stroke="#8f8f97" stroke-width="1.15"/></svg></div></div>
<div class="t n" style="left:1110px;top:549px;font:normal 14.85px/20px 'Liberation Serif', serif;">Sensor B installed:</div>
<div class="chk" style="left:1250px;top:551px;width:15px;height:15px"></div>
<div class="btn" style="left:1110px;top:568px;width:205px;height:19px;padding-top:1px;font:bold 10.9px/16px 'Liberation Sans', sans-serif;">Test Pump</div>
<div class="t" style="left:812.0px;top:586px;width:800px;text-align:center;font:bold 15px/20px 'Liberation Serif', serif;">Live:</div>
<div class="t n" style="left:1110px;top:604px;font:normal 14.85px/20px 'Liberation Serif', serif;">Sensor A:</div>
<div class="t n" style="left:1190px;top:604px;font:normal 14.85px/20px 'Liberation Serif', serif;">loading</div>
<div class="t n" style="left:1110px;top:622px;font:normal 14.85px/20px 'Liberation Serif', serif;">Sensor B:</div>
<div class="t n" style="left:1190px;top:622px;font:normal 14.85px/20px 'Liberation Serif', serif;">loading</div>
<div class="box" style="left:1322px;top:395px;width:220px;height:253px;"></div>
<div class="t" style="left:1031.5px;top:401px;width:800px;text-align:center;font:bold 15px/20px 'Liberation Serif', serif;">Plant 7</div>
<div class="t n" style="left:1329px;top:419px;font:normal 14.85px/20px 'Liberation Serif', serif;">Mode:</div>
<div class="sel" style="left:1470px;top:420px;width:65px;height:18.30000000000001px;line-height:16.30000000000001px;">Off<svg class="chev" style="top:6px" width="8" height="6" viewBox="0 0 8 6"><path d="M1 1.2 L4 4.2 L7 1.2" fill="none" stroke="#1c1b22" stroke-width="1.4"/></svg></div>
<div class="t n" style="left:1329px;top:438px;font:normal 14.85px/20px 'Liberation Serif', serif;">Target Moisture:</div>
<div class="inp" style="left:1470px;top:439px;width:65px;height:18px;line-height:16px;">40<div class="spin" style="top:1px;height:14px"><svg width="14" height="14" viewBox="0 0 14 14" preserveAspectRatio="none"><path d="M4 5.2 L7 2.4 L10 5.2 M4 8.8 L7 11.6 L10 8.8" fill="none" stroke="#8f8f97" stroke-width="1.15"/></svg></div></div>
<div class="t n" style="left:1329px;top:456.5px;font:normal 14.85px/20px 'Liberation Serif', serif;">Pump Time (s):</div>
<div class="inp" style="left:1470px;top:457.5px;width:65px;height:18.0px;line-height:16.0px;">30<div class="spin" style="top:1px;height:14.0px"><svg width="14" height="14.0" viewBox="0 0 14 14" preserveAspectRatio="none"><path d="M4 5.2 L7 2.4 L10 5.2 M4 8.8 L7 11.6 L10 8.8" fill="none" stroke="#8f8f97" stroke-width="1.15"/></svg></div></div>
<div class="t n" style="left:1329px;top:475px;font:normal 14.85px/20px 'Liberation Serif', serif;">Pump Cooldown (m):</div>
<div class="inp" style="left:1470px;top:476px;width:65px;height:18px;line-height:16px;">60<div class="spin" style="top:1px;height:14px"><svg width="14" height="14" viewBox="0 0 14 14" preserveAspectRatio="none"><path d="M4 5.2 L7 2.4 L10 5.2 M4 8.8 L7 11.6 L10 8.8" fill="none" stroke="#8f8f97" stroke-width="1.15"/></svg></div></div>
<div class="t n" style="left:1329px;top:494px;font:normal 14.85px/20px 'Liberation Serif', serif;">"Pump Hour Start":</div>
<div class="sel" style="left:1470px;top:495px;width:65px;height:18.299999999999955px;line-height:16.299999999999955px;">9<svg class="chev" style="top:6px" width="8" height="6" viewBox="0 0 8 6"><path d="M1 1.2 L4 4.2 L7 1.2" fill="none" stroke="#1c1b22" stroke-width="1.4"/></svg></div>
<div class="t n" style="left:1329px;top:512px;font:normal 14.85px/20px 'Liberation Serif', serif;">"Pump Hour End":</div>
<div class="sel" style="left:1470px;top:513px;width:65px;height:18.299999999999955px;line-height:16.299999999999955px;">20<svg class="chev" style="top:6px" width="8" height="6" viewBox="0 0 8 6"><path d="M1 1.2 L4 4.2 L7 1.2" fill="none" stroke="#1c1b22" stroke-width="1.4"/></svg></div>
<div class="t n" style="left:1329px;top:531px;font:normal 14.85px/20px 'Liberation Serif', serif;">Warn Pump Count:</div>
<div class="inp" style="left:1470px;top:532px;width:65px;height:18px;line-height:16px;">10<div class="spin" style="top:1px;height:14px"><svg width="14" height="14" viewBox="0 0 14 14" preserveAspectRatio="none"><path d="M4 5.2 L7 2.4 L10 5.2 M4 8.8 L7 11.6 L10 8.8" fill="none" stroke="#8f8f97" stroke-width="1.15"/></svg></div></div>
<div class="t n" style="left:1329px;top:549px;font:normal 14.85px/20px 'Liberation Serif', serif;">Sensor B installed:</div>
<div class="chk" style="left:1470px;top:551px;width:15px;height:15px"></div>
<div class="btn" style="left:1329px;top:568px;width:206px;height:19px;padding-top:1px;font:bold 10.9px/16px 'Liberation Sans', sans-serif;">Test Pump</div>
<div class="t" style="left:1031.5px;top:586px;width:800px;text-align:center;font:bold 15px/20px 'Liberation Serif', serif;">Live:</div>
<div class="t n" style="left:1329px;top:604px;font:normal 14.85px/20px 'Liberation Serif', serif;">Sensor A:</div>
<div class="t n" style="left:1409px;top:604px;font:normal 14.85px/20px 'Liberation Serif', serif;">loading</div>
<div class="t n" style="left:1329px;top:622px;font:normal 14.85px/20px 'Liberation Serif', serif;">Sensor B:</div>
<div class="t n" style="left:1409px;top:622px;font:normal 14.85px/20px 'Liberation Serif', serif;">loading</div>
<div class="box" style="left:1542px;top:395px;width:220px;height:253px;"></div>
<div class="t" style="left:1251.5px;top:401px;width:800px;text-align:center;font:bold 15px/20px 'Liberation Serif', serif;">Plant 8</div>
<div class="t n" style="left:1549px;top:419px;font:normal 14.85px/20px 'Liberation Serif', serif;">Mode:</div>
<div class="sel" style="left:1689px;top:420px;width:65px;height:18.30000000000001px;line-height:16.30000000000001px;">Off<svg class="chev" style="top:6px" width="8" height="6" viewBox="0 0 8 6"><path d="M1 1.2 L4 4.2 L7 1.2" fill="none" stroke="#1c1b22" stroke-width="1.4"/></svg></div>
<div class="t n" style="left:1549px;top:438px;font:normal 14.85px/20px 'Liberation Serif', serif;">Target Moisture:</div>
<div class="inp" style="left:1689px;top:439px;width:65px;height:18px;line-height:16px;">40<div class="spin" style="top:1px;height:14px"><svg width="14" height="14" viewBox="0 0 14 14" preserveAspectRatio="none"><path d="M4 5.2 L7 2.4 L10 5.2 M4 8.8 L7 11.6 L10 8.8" fill="none" stroke="#8f8f97" stroke-width="1.15"/></svg></div></div>
<div class="t n" style="left:1549px;top:456.5px;font:normal 14.85px/20px 'Liberation Serif', serif;">Pump Time (s):</div>
<div class="inp" style="left:1689px;top:457.5px;width:65px;height:18.0px;line-height:16.0px;">30<div class="spin" style="top:1px;height:14.0px"><svg width="14" height="14.0" viewBox="0 0 14 14" preserveAspectRatio="none"><path d="M4 5.2 L7 2.4 L10 5.2 M4 8.8 L7 11.6 L10 8.8" fill="none" stroke="#8f8f97" stroke-width="1.15"/></svg></div></div>
<div class="t n" style="left:1549px;top:475px;font:normal 14.85px/20px 'Liberation Serif', serif;">Pump Cooldown (m):</div>
<div class="inp" style="left:1689px;top:476px;width:65px;height:18px;line-height:16px;">60<div class="spin" style="top:1px;height:14px"><svg width="14" height="14" viewBox="0 0 14 14" preserveAspectRatio="none"><path d="M4 5.2 L7 2.4 L10 5.2 M4 8.8 L7 11.6 L10 8.8" fill="none" stroke="#8f8f97" stroke-width="1.15"/></svg></div></div>
<div class="t n" style="left:1549px;top:494px;font:normal 14.85px/20px 'Liberation Serif', serif;">"Pump Hour Start":</div>
<div class="sel" style="left:1689px;top:495px;width:65px;height:18.299999999999955px;line-height:16.299999999999955px;">9<svg class="chev" style="top:6px" width="8" height="6" viewBox="0 0 8 6"><path d="M1 1.2 L4 4.2 L7 1.2" fill="none" stroke="#1c1b22" stroke-width="1.4"/></svg></div>
<div class="t n" style="left:1549px;top:512px;font:normal 14.85px/20px 'Liberation Serif', serif;">"Pump Hour End":</div>
<div class="sel" style="left:1689px;top:513px;width:65px;height:18.299999999999955px;line-height:16.299999999999955px;">20<svg class="chev" style="top:6px" width="8" height="6" viewBox="0 0 8 6"><path d="M1 1.2 L4 4.2 L7 1.2" fill="none" stroke="#1c1b22" stroke-width="1.4"/></svg></div>
<div class="t n" style="left:1549px;top:531px;font:normal 14.85px/20px 'Liberation Serif', serif;">Warn Pump Count:</div>
<div class="inp" style="left:1689px;top:532px;width:65px;height:18px;line-height:16px;">10<div class="spin" style="top:1px;height:14px"><svg width="14" height="14" viewBox="0 0 14 14" preserveAspectRatio="none"><path d="M4 5.2 L7 2.4 L10 5.2 M4 8.8 L7 11.6 L10 8.8" fill="none" stroke="#8f8f97" stroke-width="1.15"/></svg></div></div>
<div class="t n" style="left:1549px;top:549px;font:normal 14.85px/20px 'Liberation Serif', serif;">Sensor B installed:</div>
<div class="chk" style="left:1689px;top:551px;width:15px;height:15px"></div>
<div class="btn" style="left:1549px;top:568px;width:205px;height:19px;padding-top:1px;font:bold 10.9px/16px 'Liberation Sans', sans-serif;">Test Pump</div>
<div class="t" style="left:1251.5px;top:586px;width:800px;text-align:center;font:bold 15px/20px 'Liberation Serif', serif;">Live:</div>
<div class="t n" style="left:1549px;top:604px;font:normal 14.85px/20px 'Liberation Serif', serif;">Sensor A:</div>
<div class="t n" style="left:1629px;top:604px;font:normal 14.85px/20px 'Liberation Serif', serif;">loading</div>
<div class="t n" style="left:1549px;top:622px;font:normal 14.85px/20px 'Liberation Serif', serif;">Sensor B:</div>
<div class="t n" style="left:1629px;top:622px;font:normal 14.85px/20px 'Liberation Serif', serif;">loading</div>
<div class="box" style="left:4px;top:648px;width:735px;height:323px;"></div>
<div class="btn" style="left:12px;top:656px;width:59px;height:19px;padding-top:1px;font:normal 10.4px/16px 'Liberation Sans', sans-serif;">Show Json</div>
<div class="btn" style="left:74px;top:656px;width:44px;height:19px;padding-top:1px;font:normal 11.2px/16px 'Liberation Sans', sans-serif;">Submit</div>
<div class="t n" style="left:12px;top:674px;font:normal 14.85px/20px 'Liberation Serif', serif;">BackupStatus:</div>
<div class="t n" style="left:12px;top:693px;font:normal 14px/20px 'Liberation Serif', serif;">2025-01-22T19:57:32+00:00</div>
<div class="t n" style="left:12px;top:711px;font:normal 14px/20px 'Liberation Serif', serif;">1735</div>
<div class="btn" style="left:12px;top:730px;width:45px;height:18px;padding-top:0px;font:normal 11.2px/16px 'Liberation Sans', sans-serif;">Backup</div>
<div class="btn" style="left:60px;top:730px;width:47px;height:18px;padding-top:0px;font:normal 11.2px/16px 'Liberation Sans', sans-serif;">Restore</div>
<div class="btn" style="left:4px;top:972px;width:27px;height:18px;padding-top:0px;font:normal 11.2px/16px 'Liberation Sans', sans-serif;">Exit</div>
<div class="btn" style="left:34px;top:972px;width:45px;height:18px;padding-top:0px;font:normal 11.2px/16px 'Liberation Sans', sans-serif;">Reboot</div>
<div class="box" style="left:739px;top:648px;width:735px;height:323px;"></div>
<div class="t" style="left:706px;top:654px;width:800px;text-align:center;font:bold 15px/20px 'Liberation Serif', serif;">Files:</div>
<div class="t n" style="left:747px;top:672.5px;font:normal 14.85px/20px 'Liberation Serif', serif;">Total Size</div>
<div class="t n" style="left:906px;top:672.5px;font:normal 14.3px/20px 'Liberation Serif', serif;">3485kB</div>
<div class="t n" style="left:747px;top:690.5px;font:normal 14.85px/20px 'Liberation Serif', serif;">Used Size</div>
<div class="t n" style="left:906px;top:690.5px;font:normal 14.3px/20px 'Liberation Serif', serif;">910kB</div>
<div class="t n" style="left:747px;top:708.5px;font:normal 14.85px/20px 'Liberation Serif', serif;">Free Size</div>
<div class="t n" style="left:906px;top:708.5px;font:normal 14.3px/20px 'Liberation Serif', serif;">2577kB</div>
<div class="box" style="left:747px;top:746px;width:719px;height:59px;border-right-color:#444;border-bottom-color:#444;"></div>
<div class="t" style="left:706px;top:747px;width:800px;text-align:center;font:bold 15px/20px 'Liberation Serif', serif;">Upload:</div>
<div class="t n" style="left:749px;top:765px;font:normal 14.85px/20px 'Liberation Serif', serif;">File:</div>
<div class="btn" style="left:909px;top:766px;width:54px;height:19px;padding-top:1px;font:normal 10.8px/16px 'Liberation Sans', sans-serif;">Browse...</div>
<div class="t" style="left:967px;top:765px;font:normal 11.1px/20px 'Liberation Sans', sans-serif;">No file selected.</div>
<div class="t n" style="left:1095px;top:765px;font:normal 14.85px/20px 'Liberation Serif', serif;">Name:</div>
<div class="inp" style="left:1255px;top:766px;width:165px;height:19px;line-height:17px;"></div>
<div class="btn" style="left:749px;top:785px;width:715px;height:18px;padding-top:0px;font:bold 10.9px/16px 'Liberation Sans', sans-serif;">Upload</div>
<div class="box" style="left:747px;top:824px;width:719px;height:138px;border-right-color:#444;border-bottom-color:#444;"></div>
<div class="t" style="left:706px;top:825px;width:800px;text-align:center;font:bold 15px/20px 'Liberation Serif', serif;">List:</div>
<div class="dot" style="left:751px;top:844px;width:711px"></div>
<div class="t n" style="left:749px;top:845px;font:normal 14.2px/20px 'Liberation Serif', serif;">0100_2_02-bq34z100.bq.fs</div>
<div class="t n" style="left:749px;top:863px;font:normal 14.85px/20px 'Liberation Serif', serif;">Size</div>
<div class="t n" style="left:909px;top:864px;font:normal 14px/20px 'Liberation Serif', serif;">180458</div>
<div class="t n" style="left:1094px;top:863px;font:normal 14.85px/20px 'Liberation Serif', serif;color:#0000ee;text-decoration:underline;">Download</div>
<div class="btn" style="left:1279px;top:864px;width:185px;height:19px;padding-top:1px;font:normal 11.2px/16px 'Liberation Sans', sans-serif;">Delete</div>
<div class="dot" style="left:751px;top:883px;width:711px"></div>
<div class="t n" style="left:749px;top:884px;font:normal 14.2px/20px 'Liberation Serif', serif;">config.cfg</div>
<div class="t n" style="left:749px;top:902px;font:normal 14.85px/20px 'Liberation Serif', serif;">Size</div>
<div class="t n" style="left:909px;top:903px;font:normal 14px/20px 'Liberation Serif', serif;">1734</div>
<div class="t n" style="left:1094px;top:902px;font:normal 14.85px/20px 'Liberation Serif', serif;color:#0000ee;text-decoration:underline;">Download</div>
<div class="btn" style="left:1279px;top:903px;width:185px;height:19px;padding-top:1px;font:normal 11.2px/16px 'Liberation Sans', sans-serif;">Delete</div>
<div class="dot" style="left:751px;top:922px;width:711px"></div>
<div class="t n" style="left:749px;top:924px;font:normal 13.8px/20px 'Liberation Serif', serif;">CD74HCT4067M96.PDF</div>
<div class="t n" style="left:749px;top:941px;font:normal 14.85px/20px 'Liberation Serif', serif;">Size</div>
<div class="t n" style="left:909px;top:942px;font:normal 14px/20px 'Liberation Serif', serif;">741433</div>
<div class="t n" style="left:1094px;top:941px;font:normal 14.85px/20px 'Liberation Serif', serif;color:#0000ee;text-decoration:underline;">Download</div>
<div class="btn" style="left:1279px;top:942px;width:185px;height:19px;padding-top:1px;font:normal 11.2px/16px 'Liberation Sans', sans-serif;">Delete</div>
</body></html>
